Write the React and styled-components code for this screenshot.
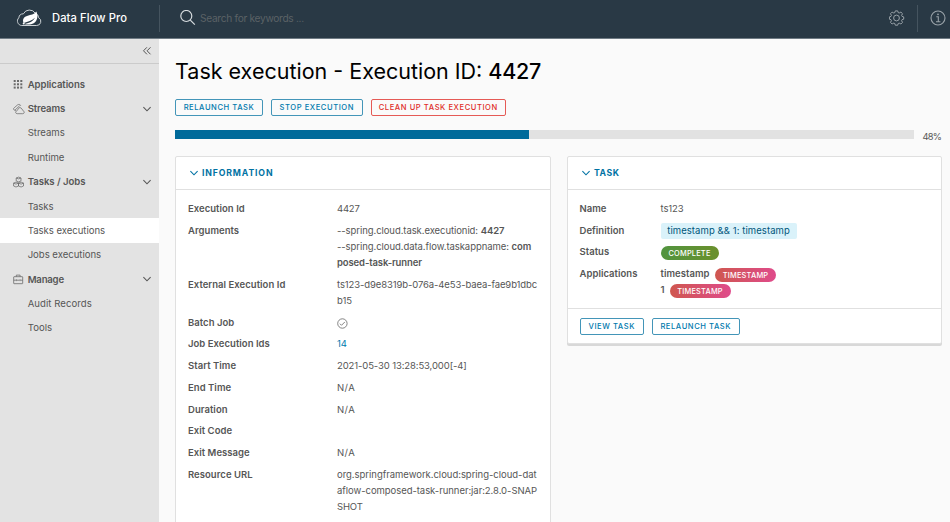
import React from 'react';
import styled, { createGlobalStyle, css } from 'styled-components';

const GlobalStyle = createGlobalStyle`
  * { box-sizing: border-box; }
  body {
    margin: 0;
    background: #fafafa;
    color: #565656;
    font-family: Inter, "Liberation Sans", sans-serif;
    font-size: 9.5px;
  }
`;

const Page = styled.div`
  height: 522px;
  overflow: hidden;
  display: flex;
  flex-direction: column;
`;

const Header = styled.header`
  flex: none;
  height: 39px;
  padding-bottom: 1px;
  display: flex;
  align-items: center;
  background: #293945;
  border-bottom: 1px solid #6f7b84;
`;

const Brand = styled.div`
  width: 159px;
  height: 28px;
  padding: 0 0 1px 16px;
  display: flex;
  align-items: center;
  gap: 10px;
  color: #fff;
  font-size: 11.2px;
  font-weight: 500;
  letter-spacing: 0.09px;
`;

const Search = styled.label`
  flex: 1;
  height: 27px;
  margin-bottom: 1px;
  padding-left: 20px;
  display: flex;
  align-items: center;
  gap: 4px;
  border-left: 1px solid #45545f;
`;

const SearchInput = styled.input`
  width: 200px;
  padding: 0 0 1px;
  border: 0;
  outline: 0;
  background: transparent;
  font: 400 10.2px Inter, sans-serif;
  letter-spacing: -0.31px;
  color: #fff;
  &::placeholder { color: #5b6265; opacity: 1; }
`;

const HeaderAction = styled.button`
  width: ${p => p.$width}px;
  height: 27px;
  margin-bottom: 1px;
  padding: 0 0 0 ${p => (p.$divided ? 7 : 0)}px;
  display: flex;
  align-items: center;
  justify-content: center;
  flex: none;
  border: 0;
  background: none;
  color: #99a2a8;
  ${p => p.$divided && css`border-left: 1px solid #45545f;`}
`;

const Body = styled.div`
  flex: 1;
  min-height: 0;
  display: flex;
`;

const Sidebar = styled.nav`
  flex: none;
  width: 159px;
  background: #e3e3e3;
`;

const Collapse = styled.div`
  height: 25px;
  padding-right: 7px;
  margin-bottom: 8px;
  display: flex;
  justify-content: flex-end;
  align-items: center;
  border-bottom: 1px solid #cbcbcb;
`;

const NavItem = styled.a`
  height: 24.38px;
  padding: 0 7px 0 13px;
  display: flex;
  align-items: center;
  color: #565656;
  font-size: 9.6px;
  font-weight: ${p => (p.$group ? 600 : 400)};
  letter-spacing: ${p => p.$spacing ?? -0.04}px;
  background: ${p => (p.$active ? '#fff' : 'transparent')};
`;

const NavIcon = styled.span`
  width: 14.7px;
  height: 12px;
  display: flex;
  align-items: center;
  color: #6a6a6a;
`;

const NavLabel = styled.span`
  flex: 1;
`;

const Main = styled.main`
  flex: 1;
  min-width: 0;
  padding: 17px 8px 0 16px;
`;

const Title = styled.h1`
  margin: 0;
  height: 30px;
  line-height: 30px;
  color: #000;
  font-size: 21.5px;
  font-weight: 400;
  white-space: nowrap;
`;

const TitleId = styled.strong`
  font-weight: 500;
  letter-spacing: -0.3px;
`;

const Actions = styled.div`
  margin-top: 13px;
  display: flex;
  gap: 8px;
`;

const Button = styled.button`
  width: ${p => p.$width}px;
  height: 17px;
  padding: 0;
  border: 1px solid ${p => (p.$danger ? '#e55a55' : '#4395b8')};
  border-radius: 2px;
  background: transparent;
  color: ${p => (p.$danger ? '#e02d28' : '#0079ad')};
  font: 500 7.6px/15px Inter, sans-serif;
  letter-spacing: 0.56px;
  text-align: center;
  white-space: nowrap;
`;

const Progress = styled.div`
  margin-top: 14px;
  height: 10px;
  display: flex;
  align-items: center;
`;

const Track = styled.div`
  width: 738.5px;
  height: 9px;
  margin-bottom: 1px;
  background: #e2e2e2;
`;

const Fill = styled.div`
  height: 100%;
  background: #006a9a;
`;

const Percent = styled.span`
  padding: 2px 0 0 9px;
  font-size: 9.3px;
  letter-spacing: -0.7px;
`;

const Cards = styled.div`
  margin-top: 16px;
  display: grid;
  grid-template-columns: 375.5px 375px;
  gap: 16.5px;
  align-items: start;
`;

const Card = styled.section`
  background: #fff;
  border: 1px solid #e0e0e0;
  border-radius: 2px;
  box-shadow: 0 2px 0 #d8d8d8;
`;

const CardHeader = styled.h2`
  margin: 0;
  height: 33px;
  padding-left: 12.5px;
  padding-bottom: 1px;
  display: flex;
  align-items: center;
  gap: 3.5px;
  border-bottom: 1px solid #e0e0e0;
  color: #0072a3;
  font-size: 8.7px;
  font-weight: 700;
  letter-spacing: ${p => p.$spacing}px;
`;

const Fields = styled.dl`
  margin: 0;
  padding: ${p => (p.$compact ? '11px 12px 9.5px 11.5px' : '11px 10px 20px 12px')};
  display: grid;
  grid-template-columns: ${p => (p.$compact ? 81 : 149)}px 1fr;
  row-gap: 5.42px;
  line-height: 16.27px;
`;

const Term = styled.dt`
  font-weight: 600;
  letter-spacing: 0.04px;
  white-space: nowrap;
`;

const Value = styled.dd`
  margin: 0;
  min-height: 16.27px;
  letter-spacing: ${p => p.$spacing ?? 0}px;
`;

const Line = styled.div`
  height: 16.27px;
  display: flex;
  align-items: center;
  white-space: pre;
  letter-spacing: ${p => p.$spacing ?? 0}px;
`;

const Strong = styled.strong`
  font-weight: 600;
`;

const Link = styled.a`
  color: #0079ad;
`;

const Code = styled.code`
  display: block;
  width: 136.5px;
  height: 16px;
  padding-left: 6.7px;
  border-radius: 2px;
  background: #daf2fa;
  color: #00567a;
  font: 400 9.5px/16px Inter, sans-serif;
  letter-spacing: 0.08px;
  white-space: nowrap;
`;

const Badge = styled.span`
  width: ${p => p.$width}px;
  height: 14.5px;
  margin-top: 1.5px;
  margin-left: ${p => p.$gap ?? 0}px;
  border-radius: 8px;
  background: ${p => (p.$success ? 'linear-gradient(90deg, #519440, #6b902c)' : 'linear-gradient(90deg, #cf574f, #df4b8b)')};
  color: #fff;
  font-size: 7.4px;
  font-weight: 500;
  line-height: 15px;
  letter-spacing: 0.2px;
  text-align: center;
`;

const CardFooter = styled.footer`
  height: 34.5px;
  padding: 9px 11.5px 8px;
  display: flex;
  gap: 8px;
  border-top: 1px solid #e0e0e0;
`;

const SpringLogo = () => (
  <svg width="26" height="18" viewBox="0 0 26 18" fill="none">
    <path d="M5.7 16.5h15a4.1 4.1 0 0 0 2-7.7 5 5 0 0 0-3.4-4.5A6.8 6.8 0 0 0 7.4 4.8a4.6 4.6 0 0 0-4.6 4.1c-2.9 2.5-.8 7.6 2.9 7.6Z" stroke="#cbd1d4" strokeWidth="1" />
    <path d="M20.4 2.6c1.8 4.3 1.3 9.4-2.7 11.7-3 1.7-7 1.4-9.7.6 4.7-.6 8.3-2 11-6.2-3.6 3.2-6.9 4-11.3 5.3-1.7-3.2.1-6.4 4-7.3 3.2-.7 6-.9 8.7-4.1Z" fill="#fff" />
    <circle cx="7.7" cy="14.4" r="1" fill="#fff" />
  </svg>
);

const SearchIcon = () => (
  <svg width="16" height="16" viewBox="0 0 16 16" fill="none" stroke="#d7dcdf" strokeWidth="1.2">
    <circle cx="6.3" cy="6" r="5.5" />
    <path d="m10.3 10.1 4.5 4.5" />
  </svg>
);

const GearIcon = () => (
  <svg width="16" height="16" viewBox="0 0 16 16" fill="none" stroke="currentColor" strokeWidth="1" strokeLinejoin="round">
    <circle cx="7.5" cy="8" r="2.9" />
    <path d="M6.3.9h2.4l.5 1.7 1 .4 1.7-.9 1.6 1.6-.9 1.7.4 1 1.7.5v2.3l-1.7.5-.4 1 .9 1.7-1.6 1.6-1.7-.9-1 .4-.5 1.7H6.3l-.5-1.7-1-.4-1.7.9-1.6-1.6.9-1.7-.4-1-1.6-.5V6.9L2 6.4l.4-1-.9-1.7 1.6-1.6 1.7.9 1-.4Z" />
  </svg>
);

const InfoIcon = () => (
  <svg width="16" height="16" viewBox="0 0 16 16" fill="none" stroke="currentColor" strokeWidth="1.1">
    <circle cx="8" cy="8" r="7" />
    <path d="M6.3 6.8h2v5M6 11.8h4.4" />
    <circle cx="8" cy="4.3" r=".9" fill="currentColor" stroke="none" />
  </svg>
);

const CollapseIcon = () => (
  <svg width="10" height="10" viewBox="0 0 10 10" fill="none" stroke="#565656" strokeWidth="1">
    <path d="M4.9 1.3 1.5 4.8l3.4 3.5M8.5 1.3 5.1 4.8l3.4 3.5" />
  </svg>
);

const Chevron = () => (
  <svg width="10" height="8" viewBox="0 0 10 8" fill="none" stroke="currentColor" strokeWidth="1.1">
    <path d="m1.4 2.2 3.6 3.6 3.6-3.6" />
  </svg>
);

const GridIcon = () => (
  <svg width="10" height="11" viewBox="0 0 10 11" fill="currentColor">
    {[1, 4.3, 7.6].map(y => [0.7, 4, 7.3].map(x => <rect key={`${x}-${y}`} x={x} y={y} width="2" height="2" />))}
  </svg>
);

const StreamsIcon = () => (
  <svg width="12" height="12" viewBox="0 0 12 12" fill="none" stroke="currentColor" strokeWidth=".75" strokeLinejoin="round">
    <path d="M4.2 10.7h5.5c1.7-.1 2-1.8.8-2.6l-2.3-3C6.7 3.9 4.9 5 5 6.6L3.2 8.2c-1.1.8-.5 2.5 1 2.5Z" />
    <path d="M2.8 7.6.9 6.8C.2 6.2.5 5.2 1.2 4.8l3.5-3c1.4-.9 2.8-.2 3 .9M1.9 7.2l4.8-4.5" />
  </svg>
);

const JobsIcon = () => (
  <svg width="12" height="12" viewBox="0 0 12 12" fill="none" stroke="currentColor" strokeWidth=".75" strokeLinejoin="round">
    <path d="M3.2 2 5.6 1.1 8 2v2.9l-2.4 1-2.4-1ZM.6 7.1l2.4-1 2.5 1V10L3 11 .6 10ZM5.5 7.1l2.6-1 2.4 1V10l-2.4 1-2.6-1ZM3.2 2l2.4.9L8 2M.6 7.1l2.4 1 2.5-1 2.6 1 2.4-1" />
  </svg>
);

const ManageIcon = () => (
  <svg width="11" height="11" viewBox="0 0 11 11" fill="none" stroke="currentColor" strokeWidth=".8">
    <rect x=".7" y="2.7" width="9" height="7" rx=".4" />
    <path d="M3.3 2.7V1.1h3.8v1.6M.7 6.2h2.2m1 0h2.7m1 0h2.1M3.4 5.3v1.8M7.1 5.3v1.8" />
  </svg>
);

const CheckIcon = () => (
  <svg width="11" height="12" viewBox="0 0 11 12" fill="none" stroke="#666" strokeWidth=".8">
    <circle cx="5.4" cy="6.5" r="4.7" />
    <path d="m2.9 6.7 1.6 1.6 3.4-3.4" />
  </svg>
);

const NAV = [
  { label: 'Applications', icon: GridIcon, spacing: -0.07 },
  { label: 'Streams', icon: StreamsIcon, open: true, spacing: -0.15 },
  { label: 'Streams' },
  { label: 'Runtime' },
  { label: 'Tasks / Jobs', icon: JobsIcon, open: true, spacing: -0.05 },
  { label: 'Tasks', spacing: -0.12 },
  { label: 'Tasks executions', active: true },
  { label: 'Jobs executions' },
  { label: 'Manage', icon: ManageIcon, open: true, spacing: -0.2 },
  { label: 'Audit Records', spacing: 0.04 },
  { label: 'Tools', spacing: 0.04 },
];

const PROGRESS = 48;

export default function App() {
  return (
    <Page>
      <GlobalStyle />
      <Header>
        <Brand><SpringLogo />Data Flow Pro</Brand>
        <Search><SearchIcon /><SearchInput placeholder="Search for keywords ..." /></Search>
        <HeaderAction $width={41} aria-label="Settings"><GearIcon /></HeaderAction>
        <HeaderAction $width={33} $divided aria-label="About"><InfoIcon /></HeaderAction>
      </Header>
      <Body>
        <Sidebar>
          <Collapse><CollapseIcon /></Collapse>
          {NAV.map(({ label, icon: Icon, open, active, spacing }, i) => (
            <NavItem key={i} $group={!!Icon} $active={active} $spacing={spacing}>
              <NavIcon>{Icon && <Icon />}</NavIcon>
              <NavLabel>{label}</NavLabel>
              {open && <Chevron />}
            </NavItem>
          ))}
        </Sidebar>
        <Main>
          <Title>Task execution - Execution ID: <TitleId>4427</TitleId></Title>
          <Actions>
            <Button $width={88}>RELAUNCH TASK</Button>
            <Button $width={91.5}>STOP EXECUTION</Button>
            <Button $width={135.5} $danger>CLEAN UP TASK EXECUTION</Button>
          </Actions>
          <Progress>
            <Track><Fill style={{ width: `${PROGRESS}%` }} /></Track>
            <Percent>{PROGRESS}%</Percent>
          </Progress>
          <Cards>
            <Card>
              <CardHeader $spacing={0.86}><Chevron />INFORMATION</CardHeader>
              <Fields>
                <Term>Execution Id</Term>
                <Value $spacing={-0.2}>4427</Value>
                <Term>Arguments</Term>
                <Value>
                  <Line $spacing={-0.07}>--spring.cloud.task.executionid: <Strong>4427</Strong></Line>
                  <Line $spacing={-0.06}>--spring.cloud.data.flow.taskappname: <Strong>com</Strong></Line>
                  <Line $spacing={-0.12}><Strong>posed-task-runner</Strong></Line>
                </Value>
                <Term>External Execution Id</Term>
                <Value>
                  <Line $spacing={-0.11}>ts123-d9e8319b-076a-4e53-baea-fae9b1dbc</Line>
                  <Line>b15</Line>
                </Value>
                <Term>Batch Job</Term>
                <Value><Line><CheckIcon /></Line></Value>
                <Term>Job Execution Ids</Term>
                <Value><Link>14</Link></Value>
                <Term>Start Time</Term>
                <Value $spacing={-0.11}>2021-05-30 13:28:53,000[-4]</Value>
                <Term>End Time</Term>
                <Value $spacing={0.4}>N/A</Value>
                <Term>Duration</Term>
                <Value $spacing={0.4}>N/A</Value>
                <Term>Exit Code</Term>
                <Value />
                <Term>Exit Message</Term>
                <Value $spacing={0.4}>N/A</Value>
                <Term>Resource URL</Term>
                <Value>
                  <Line $spacing={-0.03}>org.springframework.cloud:spring-cloud-dat</Line>
                  <Line $spacing={-0.05}>aflow-composed-task-runner:jar:2.8.0-SNAP</Line>
                  <Line $spacing={-0.15}>SHOT</Line>
                </Value>
              </Fields>
            </Card>
            <Card>
              <CardHeader $spacing={0.56}><Chevron />TASK</CardHeader>
              <Fields $compact>
                <Term>Name</Term>
                <Value $spacing={-0.1}>ts123</Value>
                <Term>Definition</Term>
                <Value><Code>timestamp &amp;&amp; 1: timestamp</Code></Value>
                <Term>Status</Term>
                <Value><Line><Badge $width={58} $success>COMPLETE</Badge></Line></Value>
                <Term>Applications</Term>
                <Value>
                  <Line $spacing={0.05}><Strong>timestamp</Strong><Badge $width={61} $gap={5.5}>TIMESTAMP</Badge></Line>
                  <Line><Strong>1</Strong><Badge $width={61} $gap={5}>TIMESTAMP</Badge></Line>
                </Value>
              </Fields>
              <CardFooter>
                <Button $width={64.5}>VIEW TASK</Button>
                <Button $width={87.5}>RELAUNCH TASK</Button>
              </CardFooter>
            </Card>
          </Cards>
        </Main>
      </Body>
    </Page>
  );
}
